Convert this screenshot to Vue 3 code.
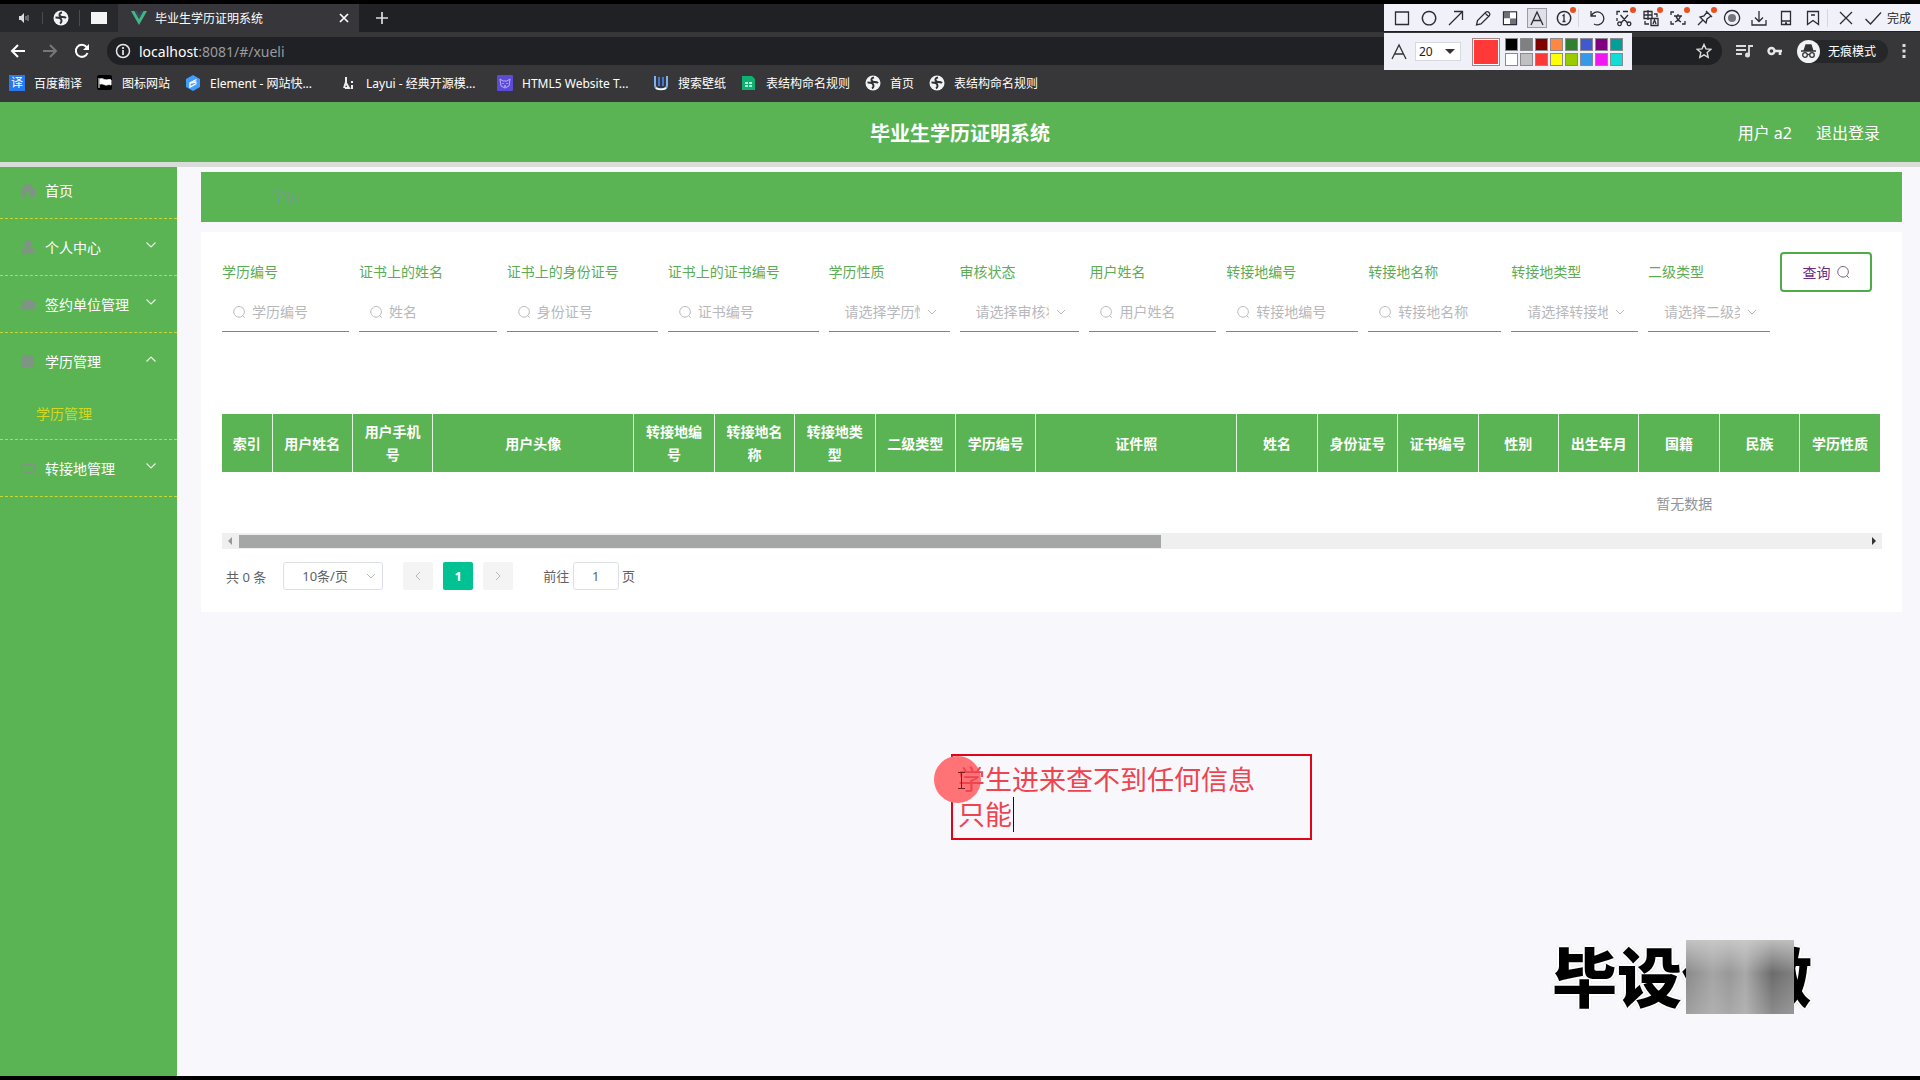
<template>
  <div class="screen">
    <div class="browser">
      <div class="tab-strip">
        <div class="pinned">
          <span class="pin">
            <svg width="12" height="12" viewBox="0 0 12 12">
              <path d="M1 4h2l3-3v10L3 8H1z" fill="#ddd" />
              <path d="M8 4v4M10 3v6" stroke="#aaa" fill="none" />
            </svg>
          </span>
          <span class="pin"><GlobeIcon /></span>
          <span class="pin"><i class="blank-page"></i></span>
        </div>
        <div class="tab">
          <svg width="16" height="14" viewBox="0 0 16 14">
            <path d="M0 0h3.500L8 8l4.500-8H16L8 14z" fill="#41b883" />
            <path d="M3.500 0H6l2 3.500L10 0h2.500L8 8z" fill="#35495e" />
          </svg>
          <span class="tab-title">毕业生学历证明系统</span>
          <button class="tab-btn" aria-label="关闭">
            <svg width="10" height="10" viewBox="0 0 10 10">
              <path d="M1 1l8 8M9 1L1 9" stroke="#fff" stroke-width="1.700" />
            </svg>
          </button>
        </div>
        <button class="tab-btn new-tab" aria-label="新标签页">
          <svg width="12" height="12" viewBox="0 0 12 12">
            <path d="M6 0v12M0 6h12" stroke="#ddd" stroke-width="1.700" />
          </svg>
        </button>
      </div>

      <div class="toolbar">
        <div class="nav-buttons">
          <button aria-label="后退">
            <svg width="16" height="16" viewBox="0 0 16 16">
              <path d="M15 8H2M8 2L2 8l6 6" fill="none" stroke="#fff" stroke-width="2" />
            </svg>
          </button>
          <button aria-label="前进">
            <svg width="16" height="16" viewBox="0 0 16 16">
              <path d="M1 8h13M8 2l6 6-6 6" fill="none" stroke="#777" stroke-width="2" />
            </svg>
          </button>
          <button aria-label="刷新">
            <svg width="16" height="16" viewBox="0 0 16 16">
              <path d="M13.500 10A6 6 0 1 1 12.500 4" fill="none" stroke="#fff" stroke-width="2" />
              <path d="M15 1v6H9z" fill="#fff" />
            </svg>
          </button>
        </div>
        <div class="omnibox">
          <svg width="16" height="16" viewBox="0 0 16 16">
            <circle cx="8" cy="8" r="6.500" fill="none" stroke="#e8e8e8" stroke-width="1.500" />
            <path d="M8 7v5M8 4v2" stroke="#e8e8e8" stroke-width="1.700" />
          </svg>
          <span class="url">localhost<em>:8081/#/xueli</em></span>
          <svg class="star" width="16" height="16" viewBox="0 0 16 16">
            <path
              d="M8 1.500l2 4.400 4.700.500-3.500 3.200 1 4.700L8 11.900l-4.200 2.400 1-4.700L1.300 6.400 6 5.900z"
              fill="none"
              stroke="#ddd"
              stroke-width="1.400"
            />
          </svg>
        </div>
        <div class="toolbar-right">
          <svg width="18" height="16" viewBox="0 0 18 16">
            <path d="M1 3h10M1 7h10M1 11h6M14 12V3h4" stroke="#ddd" stroke-width="1.800" fill="none" />
            <circle cx="12.500" cy="12" r="2.500" fill="#ddd" />
          </svg>
          <svg width="16" height="12" viewBox="0 0 16 12">
            <circle cx="4.500" cy="6" r="3" fill="none" stroke="#e8e8e8" stroke-width="2.400" />
            <path d="M7 6h8M13 6v4" stroke="#e8e8e8" stroke-width="2.600" />
          </svg>
          <span class="incognito">
            <svg width="23" height="23" viewBox="0 0 23 23">
              <circle cx="11.500" cy="11.500" r="11.500" fill="#f1f3f4" />
              <path d="M4 11h15M7.500 9.500L9 5h5l1.500 4.500z" fill="#333" stroke="#333" stroke-width="1.300" />
              <g fill="none" stroke="#333" stroke-width="1.300">
                <circle cx="8" cy="15" r="2.300" />
                <circle cx="15" cy="15" r="2.300" />
                <path d="M10.300 14.500h2.400" />
              </g>
            </svg>
            无痕模式
          </span>
          <svg width="4" height="14" viewBox="0 0 4 14">
            <path d="M.5 0h3v3h-3zM.5 5.500h3v3h-3zM.5 11h3v3h-3z" fill="#ddd" />
          </svg>
        </div>
      </div>

      <nav class="bookmarks">
        <a v-for="(item, i) in bookmarks" :key="i" href="#" class="bookmark">
          <GlobeIcon v-if="item.icon === 'globe'" />
          <span v-else-if="item.icon === 'yi'" class="yi-icon">译</span>
          <svg v-else width="16" height="16" viewBox="0 0 16 16" v-html="bookmarkIcons[item.icon]"></svg>
          <span :class="{ 'long-title': item.title.endsWith('...') }">{{ item.title }}</span>
        </a>
      </nav>

      <div class="capture">
        <div class="capture-bar">
          <template v-for="tool in captureTools" :key="tool.name">
            <i v-if="tool.name.startsWith('sep')" class="capture-sep"></i>
            <button
              v-else
              :class="['capture-btn', { active: tool.name === 'text', hot: tool.hot }]"
              :aria-label="tool.name"
            >
              <svg width="18" height="18" viewBox="0 0 18 18" v-html="tool.svg"></svg>
            </button>
          </template>
          <button class="capture-done">完成</button>
        </div>
        <div class="capture-options">
          <svg width="16" height="18" viewBox="0 0 16 18">
            <path d="M1 16L8 2l7 14M3.500 11h9" fill="none" stroke="#333" stroke-width="1.300" />
          </svg>
          <select class="size-select" aria-label="字号">
            <option>20</option>
          </select>
          <span class="current-color"></span>
          <div class="palette">
            <button
              v-for="color in palette"
              :key="color"
              class="swatch"
              :aria-label="color"
              :style="{ backgroundColor: color }"
            ></button>
          </div>
        </div>
      </div>
    </div>

    <header class="app-header">
      <h1>毕业生学历证明系统</h1>
      <div class="user-box">
        <span>用户 a2</span>
        <a href="#">退出登录</a>
      </div>
    </header>

    <div class="app-body">
      <aside class="sidebar">
        <div v-for="item in menu" :key="item.title" class="menu-item">
          <a href="#" class="menu-title">
            <svg class="menu-icon" width="14" height="14" viewBox="0 0 14 14">
              <path :d="item.icon" />
            </svg>
            <span>{{ item.title }}</span>
            <svg v-if="item.arrow" class="menu-arrow" width="12" height="8" viewBox="0 0 12 8">
              <path :d="item.arrow === 'up' ? 'M1.500 6.500L6 2l4.500 4.500' : 'M1.500 1.500L6 6l4.500-4.500'" />
            </svg>
          </a>
          <a v-if="item.child" href="#" class="submenu">{{ item.child }}</a>
        </div>
      </aside>

      <main class="content">
        <div class="breadcrumb">学历</div>

        <section class="card">
          <form class="search-form" @submit.prevent>
            <div v-for="(field, i) in fields" :key="field.label" class="field">
              <label :for="'field' + i">{{ field.label }}</label>
              <div class="control">
                <template v-if="field.select">
                  <select :id="'field' + i">
                    <option>{{ field.hint }}</option>
                  </select>
                  <svg class="select-arrow" width="10" height="8" viewBox="0 0 10 8">
                    <path d="M1 2l4 4 4-4" />
                  </svg>
                </template>
                <template v-else>
                  <svg class="search-icon" width="14" height="14" viewBox="0 0 14 14">
                    <path :d="searchPath" />
                  </svg>
                  <input :id="'field' + i" type="text" :placeholder="field.hint" />
                </template>
              </div>
            </div>
            <button class="btn-search" type="submit">
              查询
              <svg width="14" height="14" viewBox="0 0 14 14"><path :d="searchPath" /></svg>
            </button>
          </form>

          <div class="table-wrap">
            <table>
              <colgroup>
                <col class="col-index" />
                <col
                  v-for="name in columns"
                  :key="name"
                  :class="imageColumns.includes(name) ? 'col-image' : 'col-text'"
                />
                <col />
              </colgroup>
              <thead>
                <tr>
                  <th>索引</th>
                  <th v-for="name in columns" :key="name">{{ name }}</th>
                  <td></td>
                </tr>
              </thead>
              <tbody>
                <tr>
                  <td :colspan="columns.length + 2" class="empty">暂无数据</td>
                </tr>
              </tbody>
            </table>
          </div>
          <div class="scrollbar">
            <i class="scroll-left"></i>
            <div class="scroll-track"><div class="scroll-thumb"></div></div>
            <i class="scroll-right"></i>
          </div>

          <div class="pagination">
            <span class="total">共 0 条</span>
            <div class="page-size">
              <select aria-label="每页条数">
                <option>10条/页</option>
              </select>
              <svg class="select-arrow" width="10" height="8" viewBox="0 0 10 8">
                <path d="M1 2l4 4 4-4" />
              </svg>
            </div>
            <div class="pager">
              <button class="page-btn" disabled aria-label="上一页">
                <svg width="8" height="10" viewBox="0 0 8 10"><path d="M6 1L2 5l4 4" /></svg>
              </button>
              <button class="page-btn current">1</button>
              <button class="page-btn" disabled aria-label="下一页">
                <svg width="8" height="10" viewBox="0 0 8 10"><path d="M2 1l4 4-4 4" /></svg>
              </button>
            </div>
            <label class="jump">前往 <input v-model="page" type="text" /> 页</label>
          </div>
        </section>
      </main>
    </div>

    <div class="note">
      <i class="note-pointer"></i>
      <textarea v-model="note" aria-label="批注" spellcheck="false"></textarea>
      <i class="note-caret"></i>
      <svg class="note-ibeam" width="7" height="17" viewBox="0 0 7 17">
        <path d="M0 .5h7M0 16.500h7M3.500 0v17" stroke="#7a2020" />
      </svg>
    </div>

    <div class="watermark">毕设代做<i class="mosaic"></i></div>
  </div>
</template>

<script setup>
import { h, ref } from 'vue'

const page = ref('1')
const note = ref('学生进来查不到任何信息\n只能')

const GlobeIcon = () =>
  h('svg', { width: 16, height: 16, viewBox: '0 0 16 16' }, [
    h('circle', { cx: 8, cy: 8, r: 7.5, fill: '#f1f3f4' }),
    h('path', {
      d: 'M9 2.500Q6 3 6.500 5T9.500 7t3.500 1M2.500 7.500q4 0 5 1t1 2.500T7 13.500',
      fill: 'none',
      stroke: '#303134',
      'stroke-width': 2,
    }),
  ])

const bookmarks = [
  { title: '百度翻译', icon: 'yi' },
  { title: '图标网站', icon: 'flag' },
  { title: 'Element - 网站快...', icon: 'element' },
  { title: 'Layui - 经典开源模...', icon: 'layui' },
  { title: 'HTML5 Website T...', icon: 'html5' },
  { title: '搜索壁纸', icon: 'wall' },
  { title: '表结构命名规则', icon: 'sheet' },
  { title: '首页', icon: 'globe' },
  { title: '表结构命名规则', icon: 'globe' },
]

const bookmarkIcons = {
  flag: '<rect width="15" height="15" rx="2" fill="#000"/><path d="M2 3v10M3 4c3-1 4 1 6 1s3-1 5 0v5c-2-1-3 0-5 0s-3-2-6-1z" fill="#fff" stroke="#fff"/>',
  element:
    '<path d="M8 0l7 4v8l-7 4-7-4V4z" fill="#409eff"/><path d="M11.500 4.500L5 8v4l6.500-3.500M5 8l6.500-1" stroke="#fff" stroke-width="1.400" fill="none"/>',
  layui: '<path d="M5 2v7M5 7l-2 6M5 8l3 5H4M11 6v2M11 10v4" stroke="#eee" stroke-width="2" fill="none"/>',
  html5:
    '<rect width="16" height="16" rx="1" fill="#5b4bd6"/><path d="M3 4l3 2h4l3-2-1 7-4 2-4-2z" fill="none" stroke="#b9aefc"/><path d="M6 8v1M10 8v1M7 11h2" stroke="#e3dcff"/>',
  wall: '<path d="M2 1v9q0 4 4 4h4q4 0 4-4V1" fill="none" stroke="#7fb2f0" stroke-width="2"/><path d="M6 2v9M10 2v9" stroke="#3f78d8" stroke-width="2"/><path d="M3 13q5 3 10 0" stroke="#fff" stroke-width="1.500" fill="none"/>',
  sheet:
    '<path d="M1 1h10l3 3v11H1z" fill="#0fb173"/><path d="M4 8h3M8 8h3M4 11h3M8 11h3" stroke="#fff" stroke-width="1.300"/>',
}

const line = (d, extra = '') =>
  `<path d="${d}" fill="none" stroke="#2c2c34" stroke-width="1.300"/>${extra}`

const captureTools = [
  { name: 'rect', svg: line('M2.500 3h13v12.500h-13z') },
  { name: 'ellipse', svg: line('M9 2.500a6.700 6.700 0 1 0 .1 0z') },
  { name: 'arrow', svg: line('M2 16L15 3M7 2.500h8.500V11') },
  { name: 'pen', svg: line('M2.500 16l1-4.500L12 3q1.500-1 3 .5t.5 3L7 15zM11 4l3.500 3.500') },
  {
    name: 'mosaic',
    svg: line(
      'M2.500 3h13v12.500h-13z',
      '<path d="M3 3.500h6v6H3z" fill="#6d7078"/><path d="M9 3.500h6v6H9zM3 9.500h6v5.500H3z" fill="#fff"/><path d="M9 9.500h6v5.500H9z" fill="#6d7078"/>',
    ),
  },
  { name: 'text', svg: line('M3 16L9 3l6 13M5 11.500h8') },
  { name: 'number', hot: true, svg: line('M9 2.500a6.700 6.700 0 1 0 .1 0zM7.500 7L9 5.800V13M7.500 12.500h3') },
  { name: 'sep1' },
  { name: 'undo', svg: line('M3 2v5h5M3.300 7A6.500 6.500 0 1 1 6 15') },
  {
    name: 'cut',
    hot: true,
    svg: line('M2 6V2.500h3M8 2.500h5M2 9v3M5.500 6l7 8M13 6l-7 8M4.500 13a1.800 1.800 0 1 0 .1 0M14 13a1.800 1.800 0 1 0 .1 0'),
  },
  {
    name: 'translate',
    hot: true,
    svg: line('M2 2.500h8v7H2zM6 1v10M2 6h8M9 9.500h7v7H9zM11 15l1.500-4 1.500 4M12 5h3v3M3 12v3h4'),
  },
  { name: 'ocr', hot: true, svg: line('M2 6V3h3M13 15h3v-3M2 12v3h3M5 7h8M9 5v2M7 7q1 4 5 6M11.500 7q-1 4-5.500 6') },
  { name: 'pin', hot: true, svg: line('M2 16l5-5M4 8l6 6 1-4 4-3-4-4-3 4zM10 2l6 6') },
  {
    name: 'record',
    svg: line('M9 1.500a7.500 7.500 0 1 0 .1 0z', '<circle cx="9" cy="9" r="4" fill="#73757d"/>'),
  },
  { name: 'save', svg: line('M9 2v10M5 8.500l4 4 4-4M2 11v5h14v-5') },
  { name: 'phone', svg: line('M4.500 2.500h9v13h-9zM4.500 12h9M8 14h2') },
  { name: 'bookmark', svg: line('M3.500 2.500h11v13L9 11.500l-5.500 4zM7 6h4') },
  { name: 'sep2' },
  { name: 'close', svg: line('M3 3l12 12M15 3L3 15') },
  { name: 'ok', svg: line('M1.500 10l5 5L17 3.500') },
]

const palette = [
  '#000000', '#808080', '#800000', '#ff8840', '#308030', '#4058d0', '#800080', '#00a098',
  '#ffffff', '#c0c0c0', '#fb3838', '#ffff00', '#99cc00', '#3399e8', '#f018f0', '#10dcd8',
]

const menu = [
  { title: '首页', icon: 'M7 0l7 6v8H9V9H5v5H0V6z' },
  { title: '个人中心', arrow: 'down', icon: 'M7 0a3.500 3.500 0 0 1 2 6.500q5 1 5 7.500H0q0-6.500 5-7.500A3.500 3.500 0 0 1 7 0z' },
  { title: '签约单位管理', arrow: 'down', icon: 'M4 2h6v2h4v9H0V4h4z' },
  { title: '学历管理', arrow: 'up', child: '学历管理', icon: 'M1 1h12v12H1z' },
  { title: '转接地管理', arrow: 'down', icon: 'M0 3h14v1H0zM0 4h1v8H0zM13 4h1v8h-1zM3 11h8v1H3z' },
]

const fields = [
  { label: '学历编号', hint: '学历编号' },
  { label: '证书上的姓名', hint: '姓名' },
  { label: '证书上的身份证号', hint: '身份证号' },
  { label: '证书上的证书编号', hint: '证书编号' },
  { label: '学历性质', hint: '请选择学历性质', select: true },
  { label: '审核状态', hint: '请选择审核状态', select: true },
  { label: '用户姓名', hint: '用户姓名' },
  { label: '转接地编号', hint: '转接地编号' },
  { label: '转接地名称', hint: '转接地名称' },
  { label: '转接地类型', hint: '请选择转接地类型', select: true },
  { label: '二级类型', hint: '请选择二级类型', select: true },
]

const searchPath = 'M7 1.500a5.300 5.300 0 1 0 .1 0zM10.500 10.500l2.200 2.200'

const imageColumns = ['用户头像', '证件照']
const columns = [
  '用户姓名',
  '用户手机号',
  '用户头像',
  '转接地编号',
  '转接地名称',
  '转接地类型',
  '二级类型',
  '学历编号',
  '证件照',
  '姓名',
  '身份证号',
  '证书编号',
  '性别',
  '出生年月',
  '国籍',
  '民族',
  '学历性质',
]
</script>

<style>
body {
  margin: 0;
  background: #f8f8fc;
}
</style>

<style scoped>
* {
  box-sizing: border-box;
}

.screen {
  position: relative;
  display: flex;
  flex-direction: column;
  min-height: 100vh;
  border-top: 4px solid #000;
  border-bottom: 4px solid #000;
  overflow: hidden;
  font-family: 'Noto Sans', 'Noto Sans CJK SC', sans-serif;
  font-size: 14px;
  color: #606266;
}

button,
input,
select,
textarea {
  margin: 0;
  padding: 0;
  border: none;
  background: none;
  outline: none;
  font-family: inherit;
  font-size: inherit;
  color: inherit;
}

select {
  appearance: none;
}

a {
  color: inherit;
  text-decoration: none;
}

svg {
  display: block;
  flex-shrink: 0;
}

/* browser window */
.browser {
  position: relative;
  background: #37373a;
  color: #fff;
  font-size: 12px;
}

.tab-strip {
  display: flex;
  height: 28px;
  background: #202124;
}

.pinned {
  display: flex;
  align-items: center;
  width: 118px;
  padding-left: 6px;
  background: #28292c;
}

.pin {
  display: flex;
  justify-content: center;
  width: 37px;
  border-right: 1px solid #4a4b4e;
}

.pin:last-child {
  border: none;
}

.blank-page {
  width: 16px;
  height: 12px;
  background: #f4f4f4;
}

.tab {
  display: flex;
  align-items: center;
  gap: 8px;
  width: 241px;
  padding: 0 10px 0 13px;
  background: #37373b;
}

.tab-title {
  flex: 1;
}

.tab-btn {
  display: flex;
  align-items: center;
}

.new-tab {
  margin-left: 17px;
}

.toolbar {
  display: flex;
  align-items: center;
  height: 38px;
}

.nav-buttons {
  display: flex;
  gap: 16px;
  width: 107px;
  padding-left: 10px;
}

.omnibox {
  display: flex;
  flex: 1;
  align-items: center;
  gap: 8px;
  height: 28px;
  padding: 0 10px 0 8px;
  border-radius: 14px;
  background: #202124;
  font-size: 14px;
}

.url {
  flex: 1;
}

.url em {
  font-style: normal;
  color: #9a9b9e;
}

.toolbar-right {
  display: flex;
  align-items: center;
  gap: 14px;
  width: 198px;
  padding: 0 13px;
}

.incognito {
  display: flex;
  align-items: center;
  gap: 8px;
  padding-right: 12px;
  border-radius: 12px;
  background: #262729;
  white-space: nowrap;
}

.bookmarks {
  display: flex;
  gap: 15px;
  height: 32px;
  padding-left: 9px;
}

.bookmark {
  display: flex;
  align-items: center;
  gap: 9px;
  height: 26px;
  white-space: nowrap;
}

.long-title {
  width: 116px;
}

.yi-icon {
  width: 16px;
  height: 16px;
  background: #2878ee;
  line-height: 16px;
  text-align: center;
}

/* screen capture tool that floats over the browser */
.capture {
  position: absolute;
  top: 0;
  right: 0;
  color: #222;
}

.capture-bar {
  display: flex;
  align-items: center;
  height: 27px;
  padding: 0 9px 0 5px;
  background: #f0f1f9;
}

.capture-btn {
  position: relative;
  display: flex;
  align-items: center;
  justify-content: center;
  width: 27px;
  height: 22px;
}

.capture-btn.active svg {
  outline: 1px solid #9a9ba6;
  background: #dfe0ea;
}

.capture-btn.hot::after {
  content: '';
  position: absolute;
  top: 0;
  right: 2px;
  width: 6px;
  height: 6px;
  border-radius: 50%;
  background: #e8501c;
}

.capture-sep {
  width: 6px;
  height: 18px;
  border-left: 1px solid #d5d6de;
}

.capture-options {
  position: relative;
  display: flex;
  align-items: center;
  width: 248px;
  height: 37px;
  margin-top: 2px;
  padding-left: 7px;
  background: #eff0f8;
}

.capture-options::after {
  content: '';
  position: absolute;
  top: 16px;
  left: 61px;
  border: 5px solid transparent;
  border-top-color: #333;
  border-bottom: none;
}

.size-select {
  width: 46px;
  height: 19px;
  margin: 0 11px 0 8px;
  padding-left: 3px;
  border: 1px solid #d8d8e0;
  background: #fff;
}

.current-color {
  width: 28px;
  height: 28px;
  border: 1px solid #b08080;
  background: #ff3838;
  box-shadow: inset 0 0 0 1px #fff;
}

.palette {
  display: grid;
  grid-template-columns: repeat(8, 13px);
  gap: 2px;
  margin-left: 5px;
}

.swatch {
  height: 13px;
  border: 1px solid #8a8a90;
}

/* application */
.app-header {
  position: relative;
  z-index: 1;
  display: grid;
  grid-template-columns: 1fr auto 1fr;
  align-items: center;
  height: 60px;
  padding: 0 40px;
  background: #5ab453;
  box-shadow: 0 5px 0 #dadcda;
  color: #fff;
}

.app-header h1 {
  grid-column: 2;
  margin: 0;
  font-size: 20px;
  font-weight: 700;
}

.user-box {
  display: flex;
  justify-content: flex-end;
  gap: 24px;
  font-size: 16px;
}

.app-body {
  display: flex;
  flex: 1;
  background: #f8f8fc;
}

.sidebar {
  flex-shrink: 0;
  width: 177px;
  background: #5ab453;
}

.menu-item {
  border-bottom: 1px dashed #c8d832;
}

.menu-title {
  display: flex;
  align-items: center;
  gap: 10px;
  height: 56px;
  padding: 0 20px 0 21px;
  color: #fff;
}

.menu-icon {
  fill: #7f9584;
}

.menu-arrow {
  margin: 0 0 5px auto;
  fill: none;
  stroke: #e6f5e4;
  stroke-width: 1.2;
}

.submenu {
  display: block;
  padding-left: 36px;
  line-height: 50px;
  color: #d2d822;
}

.content {
  flex: 1;
  min-width: 0;
  padding: 10px 18px 0 24px;
}

.breadcrumb {
  padding-left: 71px;
  background: #5ab453;
  line-height: 50px;
  color: #7d94a4;
}

.card {
  margin-top: 10px;
  padding: 20px 20px 22px 21px;
  background: #fff;
}

.search-form {
  display: grid;
  grid-template-columns: 127fr 138fr 151fr 151fr 121fr 120fr 127fr 132fr 133fr 127fr 122fr 92px;
  gap: 10px;
  margin-bottom: 82px;
  padding-right: 10px;
}

.field {
  min-width: 0;
}

.field label {
  display: block;
  line-height: 40px;
  white-space: nowrap;
  color: #5bac55;
}

.control {
  position: relative;
  display: flex;
  align-items: center;
  gap: 6px;
  height: 40px;
  padding-left: 10px;
  border-bottom: 1px solid #6f8f76;
}

.control input {
  width: 100%;
  min-width: 0;
}

.control input::placeholder {
  color: #b8b8bc;
  opacity: 1;
}

.control select {
  width: 100%;
  height: 100%;
  padding: 0 30px 0 6px;
  color: #b8b8bc;
}

.search-icon,
.select-arrow {
  fill: none;
  stroke: #b8b8bc;
}

.select-arrow {
  position: absolute;
  top: 50%;
  right: 13px;
  margin-top: -4px;
  pointer-events: none;
}

.btn-search {
  display: flex;
  align-items: center;
  justify-content: center;
  gap: 5px;
  height: 40px;
  border: 2px solid #4eab47;
  border-radius: 4px;
  color: #6a2a88;
  cursor: pointer;
}

.btn-search svg {
  fill: none;
  stroke: #6f5a80;
}

.table-wrap {
  overflow: hidden;
  margin-right: 2px;
}

table {
  width: 176.4%;
  border-collapse: collapse;
  table-layout: fixed;
}

.col-index {
  width: 50px;
}

.col-text {
  width: 2.75%;
}

.col-image {
  width: 6.87%;
}

th {
  height: 58px;
  padding: 0 10px;
  border-right: 1px solid #e4f3e2;
  background: #5ab453;
  line-height: 23px;
  font-weight: 700;
  color: #fff;
}

.empty {
  height: 61px;
  padding: 0;
  text-align: center;
  color: #909399;
}

.scrollbar {
  display: flex;
  align-items: center;
  height: 16px;
  padding: 0 6px;
  background: #efefef;
}

.scroll-left,
.scroll-right {
  border: 4px solid transparent;
}

.scroll-left {
  border-right-color: #999;
  border-left: none;
}

.scroll-right {
  border-left-color: #333;
  border-right: none;
}

.scroll-track {
  flex: 1;
  margin: 0 7px;
}

.scroll-thumb {
  width: 56.7%;
  height: 13px;
  background: #a5a7a6;
}

.pagination {
  display: flex;
  align-items: center;
  margin-top: 13px;
  padding-left: 4px;
  font-size: 13px;
}

.page-size {
  position: relative;
  width: 100px;
  margin: 0 20px 0 17px;
}

.page-size select {
  width: 100%;
  height: 28px;
  padding-left: 18px;
  border: 1px solid #dcdfe6;
  border-radius: 3px;
}

.page-size .select-arrow {
  right: 7px;
}

.pager {
  display: flex;
  gap: 10px;
}

.page-btn {
  display: flex;
  align-items: center;
  justify-content: center;
  width: 30px;
  height: 28px;
  border-radius: 2px;
  background: #f4f4f5;
}

.page-btn svg {
  fill: none;
  stroke: #b4b7bd;
}

.page-btn.current {
  background: #00c292;
  font-weight: 700;
  color: #fff;
}

.jump {
  margin-left: 30px;
}

.jump input {
  width: 46px;
  height: 28px;
  border: 1px solid #dcdfe6;
  border-radius: 3px;
  text-align: center;
}

/* annotation drawn with the capture tool */
.note {
  position: absolute;
  top: 750px;
  left: 951px;
  width: 361px;
  height: 86px;
  border: 2px solid #e00418;
}

.note textarea {
  position: relative;
  display: block;
  width: 100%;
  height: 100%;
  padding: 5px;
  resize: none;
  overflow: hidden;
  font-family: 'Noto Sans CJK SC', sans-serif;
  font-size: 27px;
  line-height: 35px;
  color: #ee4450;
}

.note-pointer {
  position: absolute;
  top: 0;
  left: -19px;
  width: 47px;
  height: 47px;
  border-radius: 50%;
  background: #ff7377;
}

.note-caret {
  position: absolute;
  top: 41px;
  left: 60px;
  width: 1px;
  height: 35px;
  background: #111;
}

.note-ibeam {
  position: absolute;
  top: 16px;
  left: 5px;
}

.watermark {
  position: absolute;
  right: 108px;
  bottom: 54px;
  font-family: 'Noto Sans CJK SC', sans-serif;
  font-size: 65px;
  font-weight: 900;
  line-height: 96px;
  color: #000;
  text-shadow:
    2px 0 #fff,
    -2px 0 #fff,
    0 2px #fff,
    0 -2px #fff,
    0 0 3px #666;
}

.mosaic {
  position: absolute;
  top: 14px;
  right: 18px;
  width: 108px;
  height: 74px;
  background:
    linear-gradient(#d0d0d0cc, #aaaaaa00 45%, #c8c8c855),
    linear-gradient(90deg, #8a8a8a, #a5a5a5 25%, #989898 40%, #a8a8a8 55%, #6c6c6c 80%, #808080);
}
</style>
